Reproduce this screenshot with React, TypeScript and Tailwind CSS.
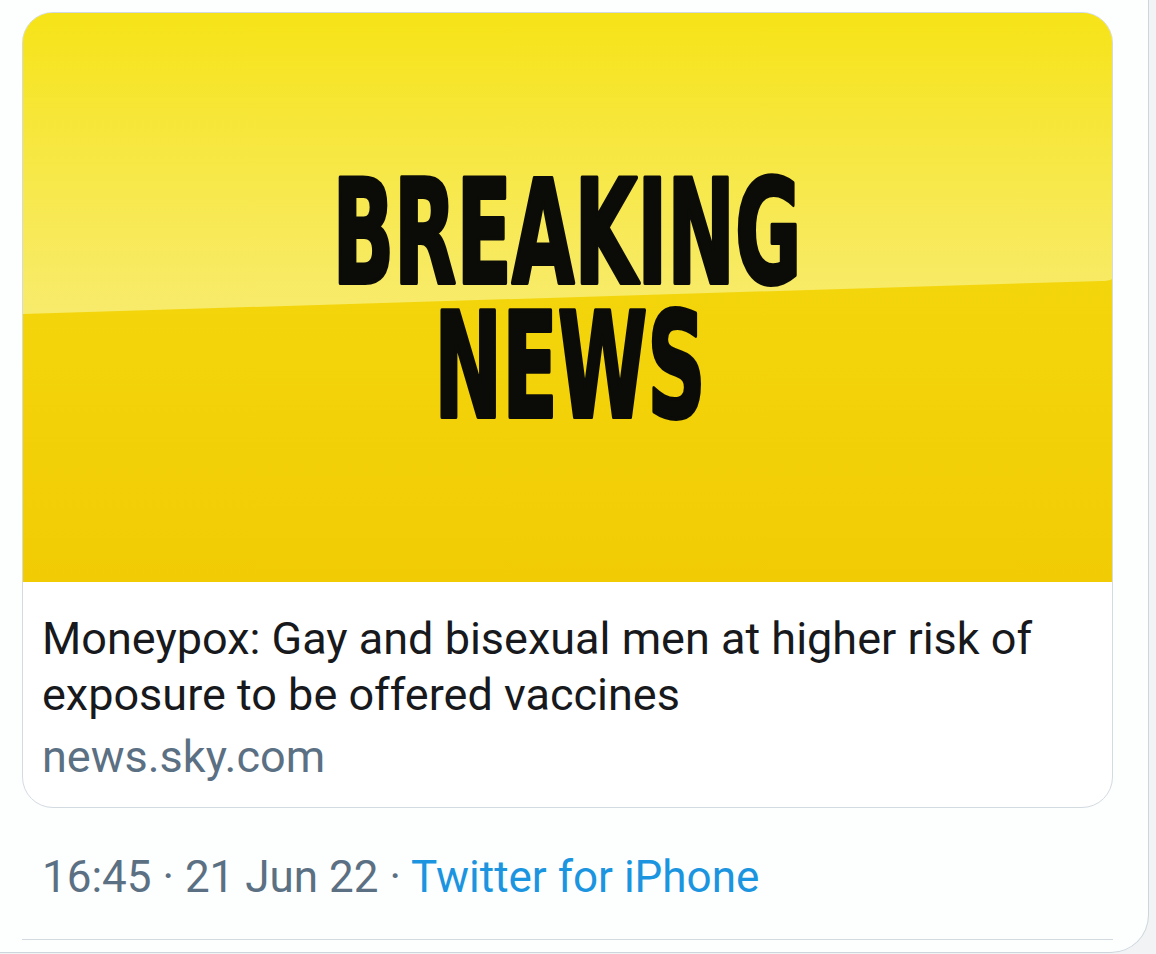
import React from "react";

const font = { fontFamily: "Roboto, 'Noto Sans', Arial, sans-serif" };

function BreakingNewsImage() {
  return (
    <svg
      viewBox="0 0 1091 569"
      width="100%"
      height="569"
      preserveAspectRatio="none"
      className="block"
    >
      <defs>
        <linearGradient id="topGlow" x1="0" y1="0" x2="0" y2="1">
          <stop offset="0" stopColor="#f6e317" />
          <stop offset="0.55" stopColor="#f7e84a" />
          <stop offset="1" stopColor="#f8eb6c" />
        </linearGradient>
        <linearGradient id="lowBand" x1="0" y1="0" x2="0" y2="1">
          <stop offset="0" stopColor="#f6de14" />
          <stop offset="1" stopColor="#f1cc04" />
        </linearGradient>
      </defs>
      <rect x="0" y="0" width="1091" height="569" fill="url(#lowBand)" />
      <path d="M0 0 H1091 V266 Q1088 268 1080 268 L0 301 Z" fill="url(#topGlow)" />
      <text
        textAnchor="middle"
        fontFamily="'DejaVu Sans Condensed', 'DejaVu Sans', sans-serif"
        fontWeight="bold"
        fontSize="145"
        fill="#0b0b08"
        stroke="#0b0b08"
        strokeWidth="4"
        strokeLinejoin="round"
      >
        <tspan x="545" y="270" textLength="470" lengthAdjust="spacingAndGlyphs">
          BREAKING
        </tspan>
        <tspan x="548" y="404" fontSize="147" textLength="272" lengthAdjust="spacingAndGlyphs">
          NEWS
        </tspan>
      </text>
    </svg>
  );
}

export default function App() {
  return (
    <div className="min-h-[954px] w-full bg-[#f1f3f5]" style={font}>
      <div className="w-[1149px] h-[953px] bg-[#fdfefe] border-r border-b border-[#cdd6dd] rounded-br-[38px] pl-[22px] pr-[35px] pt-[12px]">
        <div className="border border-[#d3dbe1] rounded-[31px] overflow-hidden bg-white">
          <BreakingNewsImage />
          <div className="pl-[19px] pr-4 pt-[29px] pb-[22px]">
            <div className="text-[45px] leading-[56px] text-[#17191c]">
              Moneypox: Gay and bisexual men at higher risk of exposure to be offered vaccines
            </div>
            <div className="mt-[6px] text-[45px] leading-[56px] text-[#5b7083]">news.sky.com</div>
          </div>
        </div>
        <div className="mt-[45px] pl-[20px] text-[44px] leading-[48px] text-[#5b7083]">
          16:45 · 21 Jun 22 · <span className="text-[#1b95e0]">Twitter for iPhone</span>
        </div>
        <div className="mt-[38px] h-px bg-[#d3dbe1]" />
      </div>
    </div>
  );
}
